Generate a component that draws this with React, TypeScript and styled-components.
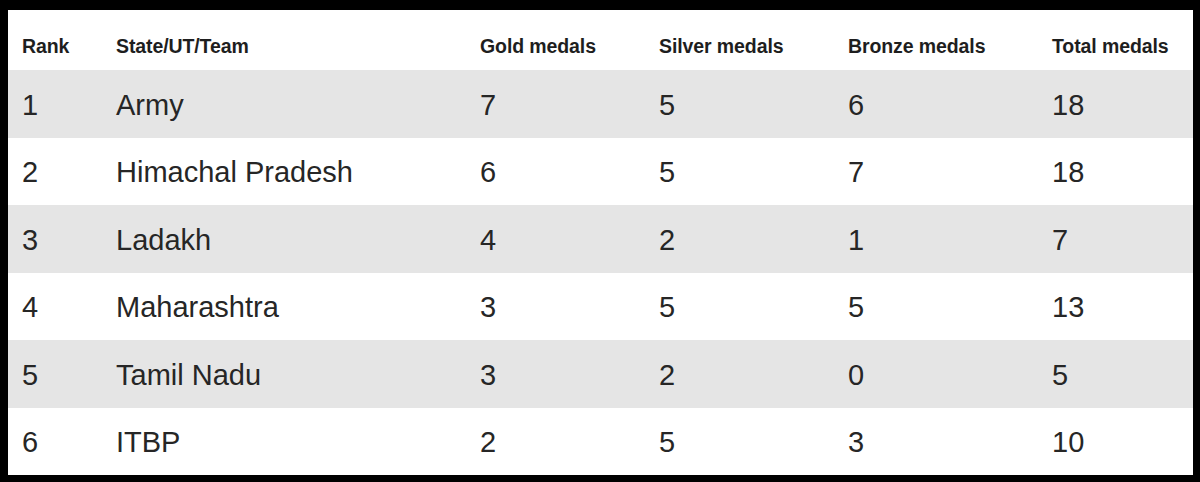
import React from 'react';
import styled, { createGlobalStyle } from 'styled-components';

interface MedalRow {
    rank: number;
    team: string;
    gold: number;
    silver: number;
    bronze: number;
    total: number;
}

const rows: MedalRow[] = [
    { rank: 1, team: 'Army', gold: 7, silver: 5, bronze: 6, total: 18 },
    { rank: 2, team: 'Himachal Pradesh', gold: 6, silver: 5, bronze: 7, total: 18 },
    { rank: 3, team: 'Ladakh', gold: 4, silver: 2, bronze: 1, total: 7 },
    { rank: 4, team: 'Maharashtra', gold: 3, silver: 5, bronze: 5, total: 13 },
    { rank: 5, team: 'Tamil Nadu', gold: 3, silver: 2, bronze: 0, total: 5 },
    { rank: 6, team: 'ITBP', gold: 2, silver: 5, bronze: 3, total: 10 },
];

const columns = ['Rank', 'State/UT/Team', 'Gold medals', 'Silver medals', 'Bronze medals', 'Total medals'];

const GlobalStyle = createGlobalStyle`
    html, body {
        margin: 0;
        padding: 0;
        background: #000;
    }
`;

const Frame = styled.div`
    padding: 10px 7px 7px 8px;
    background: #000;
    width: 1200px;
    height: 482px;
    box-sizing: border-box;
`;

const Table = styled.div`
    background: #fff;
    height: 465px;
    font-family: 'Liberation Sans', Arial, sans-serif;
`;

const Row = styled.div<{ $shaded?: boolean; $head?: boolean }>`
    display: grid;
    grid-template-columns: 94px 364px 179px 189px 204px 1fr;
    align-items: ${props => (props.$head ? 'end' : 'center')};
    height: ${props => (props.$head ? '60px' : '67.5px')};
    background: ${props => (props.$shaded ? '#e5e5e5' : '#fff')};
    box-sizing: border-box;
    padding-bottom: ${props => (props.$head ? '13px' : '0')};
`;

const HeadCell = styled.div`
    padding-left: 14px;
    font-size: 19.5px;
    font-weight: bold;
    color: #1e1e1e;
    letter-spacing: -0.1px;
    line-height: 22px;
    white-space: nowrap;
`;

const Cell = styled.div`
    padding-left: 14px;
    padding-top: 3px;
    font-size: 29px;
    color: #262626;
    line-height: 33px;
    white-space: nowrap;
`;

export default function App() {
    return (
        <>
            <GlobalStyle />
            <Frame>
                <Table>
                    <Row $head>
                        {columns.map(c => (
                            <HeadCell key={c}>{c}</HeadCell>
                        ))}
                    </Row>
                    {rows.map((r, i) => (
                        <Row key={r.rank} $shaded={i % 2 === 0}>
                            <Cell>{r.rank}</Cell>
                            <Cell>{r.team}</Cell>
                            <Cell>{r.gold}</Cell>
                            <Cell>{r.silver}</Cell>
                            <Cell>{r.bronze}</Cell>
                            <Cell>{r.total}</Cell>
                        </Row>
                    ))}
                </Table>
            </Frame>
        </>
    );
}
